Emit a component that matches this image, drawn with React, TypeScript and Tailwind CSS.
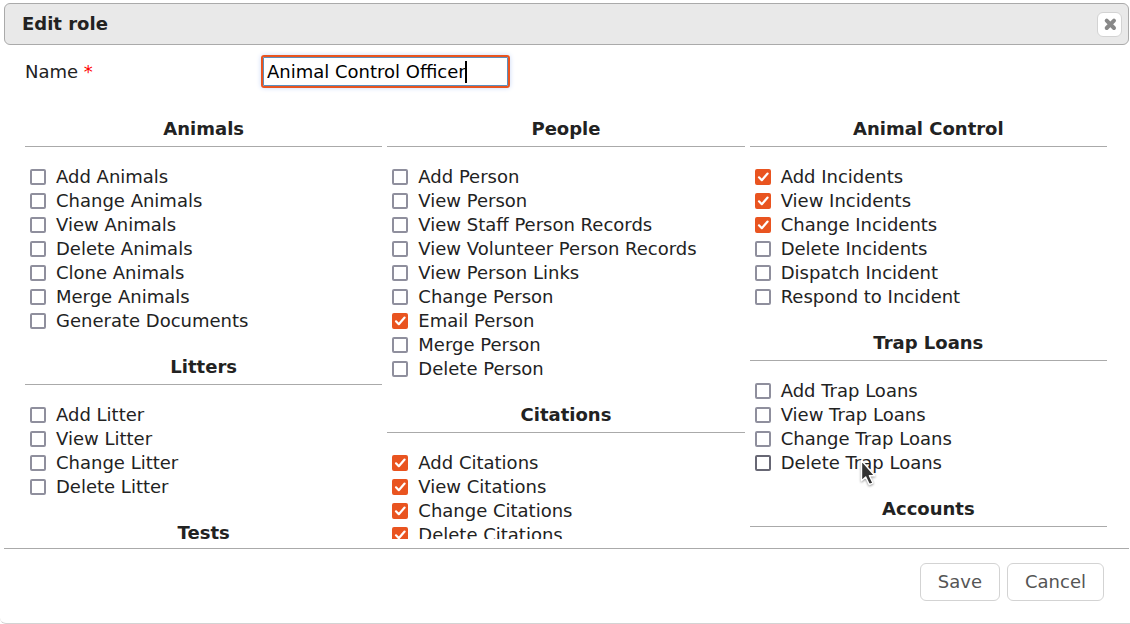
import { useState } from "react";

type Permission = { label: string; checked?: boolean; hovered?: boolean };
type Group = { title: string; permissions: Permission[] };

const off = (...labels: string[]): Permission[] => labels.map((label) => ({ label }));
const on = (...labels: string[]): Permission[] => labels.map((label) => ({ label, checked: true }));

const columns: Group[][] = [
  [
    {
      title: "Animals",
      permissions: off(
        "Add Animals",
        "Change Animals",
        "View Animals",
        "Delete Animals",
        "Clone Animals",
        "Merge Animals",
        "Generate Documents"
      ),
    },
    { title: "Litters", permissions: off("Add Litter", "View Litter", "Change Litter", "Delete Litter") },
    { title: "Tests", permissions: [] },
  ],
  [
    {
      title: "People",
      permissions: [
        ...off(
          "Add Person",
          "View Person",
          "View Staff Person Records",
          "View Volunteer Person Records",
          "View Person Links",
          "Change Person"
        ),
        ...on("Email Person"),
        ...off("Merge Person", "Delete Person"),
      ],
    },
    {
      title: "Citations",
      permissions: on("Add Citations", "View Citations", "Change Citations", "Delete Citations"),
    },
  ],
  [
    {
      title: "Animal Control",
      permissions: [
        ...on("Add Incidents", "View Incidents", "Change Incidents"),
        ...off("Delete Incidents", "Dispatch Incident", "Respond to Incident"),
      ],
    },
    {
      title: "Trap Loans",
      permissions: [
        ...off("Add Trap Loans", "View Trap Loans", "Change Trap Loans"),
        { label: "Delete Trap Loans", hovered: true },
      ],
    },
    { title: "Accounts", permissions: [] },
  ],
];

const Pointer = () => (
  <svg
    className="absolute top-2 left-[110px] h-[30px] w-5 drop-shadow-[0_1px_1px_rgba(0,0,0,0.4)]"
    viewBox="0 0 20 30"
    aria-hidden="true"
  >
    <path
      d="M1.5 1.5v20.2l4.2-3.7 3.6 7.6 3.6-1.7-3.5-7.2h5.4z"
      fill="#333333"
      stroke="#fff"
      strokeWidth="1.4"
      strokeLinejoin="round"
    />
  </svg>
);

const PermissionRow = ({ label, checked, hovered }: Permission) => (
  <label className="relative flex h-6 items-center gap-[10px] pl-[5px] whitespace-nowrap">
    <span className="relative size-4 shrink-0">
      <input
        type="checkbox"
        defaultChecked={checked}
        className={`peer block size-4 appearance-none rounded-[2px] border-2 bg-white checked:border-[#e95420] checked:bg-[#e95420] ${
          hovered ? "border-[#676774]" : "border-[#8f8f9d]"
        }`}
      />
      <svg
        className="pointer-events-none absolute inset-0 hidden size-4 peer-checked:block"
        viewBox="0 0 16 16"
        fill="none"
        stroke="#fff"
        strokeWidth="2.2"
        strokeLinecap="round"
        strokeLinejoin="round"
        aria-hidden="true"
      >
        <path d="M4 8.3 6.8 11.2 12.6 4.6" />
      </svg>
    </span>
    {label}
    {hovered && <Pointer />}
  </label>
);

const PermissionGroup = ({ title, permissions }: Group) => (
  <section>
    <h3 className="mb-[18px] border-b border-[#aaaaaa] pb-[5px] text-center font-bold">{title}</h3>
    {permissions.map((permission) => (
      <PermissionRow key={permission.label} {...permission} />
    ))}
  </section>
);

const App = () => {
  const [name, setName] = useState("Animal Control Officer");

  return (
    <div className="flex h-screen flex-col rounded-bl-md border-b border-[#d3d3d3] bg-white pt-[3px] pl-1 font-['DejaVu_Sans',sans-serif] text-[18px] leading-6 text-[#222222]">
      <header className="mr-px flex h-[42px] shrink-0 items-center justify-between rounded-md border border-[#aaaaaa] bg-[#e9e9e9] pr-[6px] pl-[17px]">
        <h2 className="font-bold">Edit role</h2>
        <button
          type="button"
          aria-label="Close"
          className="flex size-[25px] items-center justify-center rounded-md border border-[#d3d3d3] bg-white"
        >
          <svg className="size-4" viewBox="0 0 16 16" stroke="#888888" strokeWidth="4" strokeLinecap="round" aria-hidden="true">
            <path d="M4.7 4.7 12 12M12 4.7 4.7 12" />
          </svg>
        </button>
      </header>

      <main className="min-h-0 flex-1 overflow-hidden pt-[10px] pr-[23px] pl-[21px]">
        <div className="flex items-center">
          <label htmlFor="role-name" className="w-[236px]">
            Name <span className="text-[#ff0000]">*</span>
          </label>
          <div className="relative">
            <input
              id="role-name"
              value={name}
              onChange={(e) => setName(e.target.value)}
              className="block h-[33px] w-[249px] rounded-[3px] border-2 border-[#e95420] px-1 text-black caret-transparent shadow-[inset_0_0_0_1px_#5b8fbe,0_0_5px_#c8d8f8] outline-none"
            />
            <span className="absolute top-[6px] left-[204px] h-[22px] w-[2px] bg-black" />
          </div>
        </div>

        <div className="mt-[29px] grid grid-cols-3 gap-[5px]">
          {columns.map((groups) => (
            <div key={groups[0].title} className="flex flex-col gap-[22px]">
              {groups.map((group) => (
                <PermissionGroup key={group.title} {...group} />
              ))}
            </div>
          ))}
        </div>
      </main>

      <footer className="mt-[9px] mr-px flex shrink-0 justify-end gap-[7px] border-t border-[#aaaaaa] pt-[14px] pr-[25px] pb-[22px] text-[#555555]">
        <button type="button" className="h-[38px] rounded-md border border-[#d3d3d3] bg-white px-[17px]">
          Save
        </button>
        <button type="button" className="h-[38px] rounded-md border border-[#d3d3d3] bg-white px-[17px]">
          Cancel
        </button>
      </footer>
    </div>
  );
};

export default App;
